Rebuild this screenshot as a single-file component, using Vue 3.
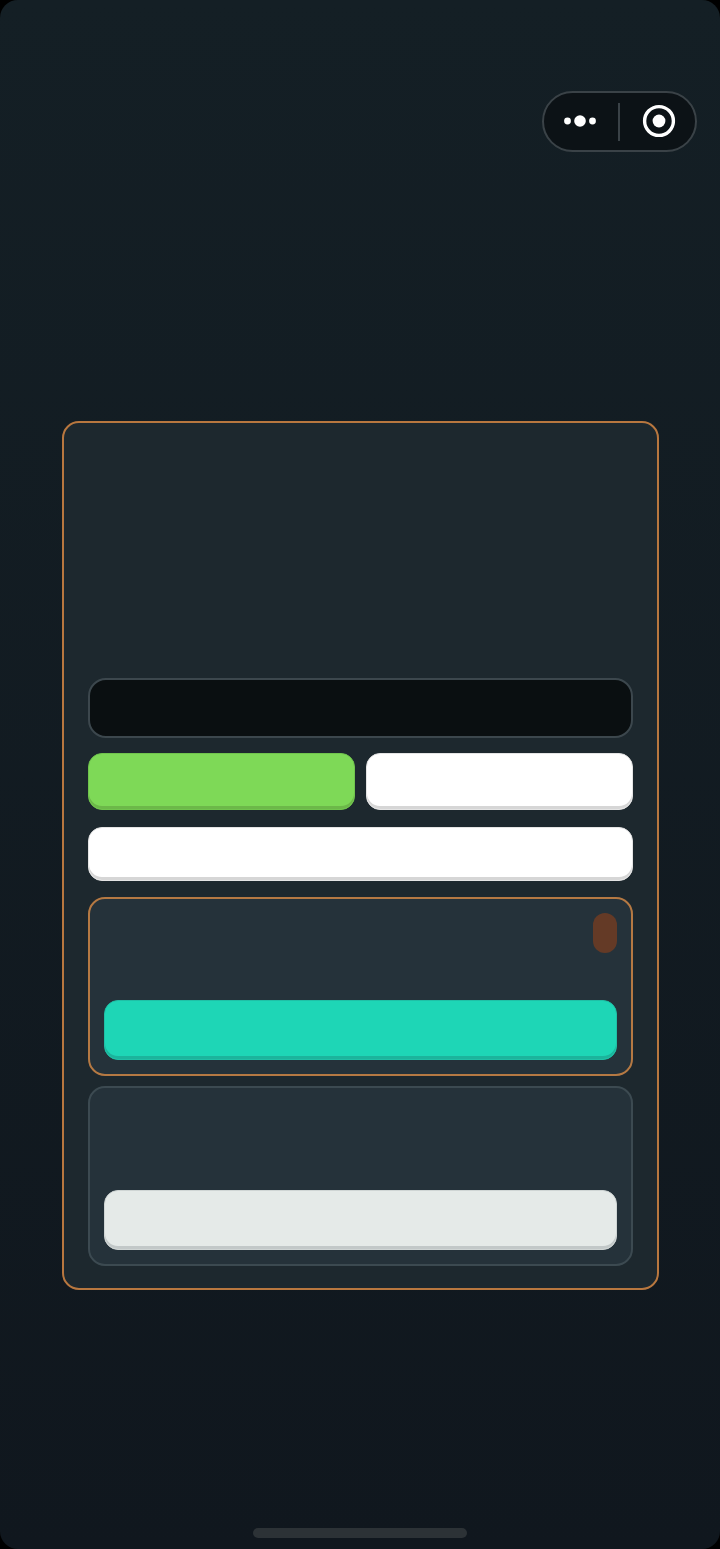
<template>
  <div class="page">
    <div class="top-bar">
      <div class="capsule">
        <div class="capsule-side dots">
          <svg width="36" height="16" viewBox="0 0 36 16">
            <circle cx="5.5" cy="8" r="3.4" fill="#fff" />
            <circle cx="18" cy="8" r="5.8" fill="#fff" />
            <circle cx="30.5" cy="8" r="3.4" fill="#fff" />
          </svg>
        </div>
        <div class="capsule-line"></div>
        <div class="capsule-side target">
          <svg width="36" height="36" viewBox="0 0 36 36">
            <circle cx="18" cy="18" r="14.4" fill="none" stroke="#fff" stroke-width="3.4" />
            <circle cx="18" cy="18" r="6.4" fill="#fff" />
          </svg>
        </div>
      </div>
    </div>

    <div class="panel">
      <div class="input-box"></div>
      <div class="btn-row">
        <div class="btn green"></div>
        <div class="btn white"></div>
      </div>
      <div class="btn white wide"></div>

      <div class="card active">
        <div class="tag"></div>
        <div class="btn teal"></div>
      </div>
      <div class="card plain">
        <div class="btn grey"></div>
      </div>
    </div>

    <div class="home-bar"></div>
  </div>
</template>

<script setup>
</script>

<style scoped>
.page {
  width: 720px;
  height: 1549px;
  display: flex;
  flex-direction: column;
  box-sizing: border-box;
  border-radius: 18px;
  background: linear-gradient(180deg, #141f25 0%, #10171e 100%);
  overflow: hidden;
}

.top-bar {
  display: flex;
  justify-content: flex-end;
  padding: 91px 23px 0 0;
}

.capsule {
  width: 155px;
  height: 61px;
  box-sizing: border-box;
  display: flex;
  align-items: center;
  border: 2px solid #3a4247;
  border-radius: 31px;
  background-color: #0c1216;
}

.capsule-side {
  flex: 1;
  display: flex;
  align-items: center;
  justify-content: center;
  padding-bottom: 1px;
}

.dots {
  padding-right: 2px;
}

.target {
  padding-left: 3px;
}

.capsule-line {
  width: 2px;
  height: 38px;
  background-color: #3a4247;
}

.panel {
  width: 597px;
  height: 869px;
  box-sizing: border-box;
  margin: 269px 0 0 62px;
  padding: 255px 24px 0;
  display: flex;
  flex-direction: column;
  border: 2px solid #b8773f;
  border-radius: 17px;
  background-color: #1d282e;
}

.input-box {
  height: 60px;
  box-sizing: border-box;
  border: 2px solid #3c474d;
  border-radius: 18px;
  background-color: #0a0f11;
}

.btn-row {
  display: flex;
  gap: 11px;
  margin-top: 15px;
}

.btn {
  height: 57px;
  box-sizing: border-box;
  border-radius: 14px;
  border: 1px solid transparent;
}

.btn-row .btn {
  flex: 1;
}

.green {
  background-color: #7ed957;
  border-color: #70c44d;
  box-shadow: inset 0 -3px 0 #6cb849;
}

.white {
  background-color: #ffffff;
  border-color: #e4e4e4;
  box-shadow: inset 0 -3px 0 #d6d6d6;
}

.wide {
  height: 54px;
  margin-top: 17px;
}

.card {
  box-sizing: border-box;
  display: flex;
  flex-direction: column;
  justify-content: flex-end;
  padding: 14px;
  border-radius: 17px;
  background-color: #25323a;
}

.card.active {
  height: 179px;
  margin-top: 16px;
  border: 2px solid #b57943;
}

.card.plain {
  height: 180px;
  margin-top: 10px;
  border: 2px solid #3c4a51;
}

.tag {
  width: 24px;
  height: 40px;
  align-self: flex-end;
  margin-bottom: 47px;
  border-radius: 12px;
  background-color: #643a26;
}

.teal {
  height: 60px;
  background-color: #1ed6b6;
  border-color: #1fc0a6;
  box-shadow: inset 0 -3px 0 #1cb49c;
}

.grey {
  height: 60px;
  background-color: #e5eae8;
  border-color: #cfd5d4;
  box-shadow: inset 0 -3px 0 #c2c8c8;
}

.home-bar {
  width: 214px;
  height: 10px;
  margin: 238px auto 0;
  border-radius: 5px;
  background-color: #2c3236;
}
</style>

<style>
html,
body {
  margin: 0;
  background-color: #000;
}
</style>
